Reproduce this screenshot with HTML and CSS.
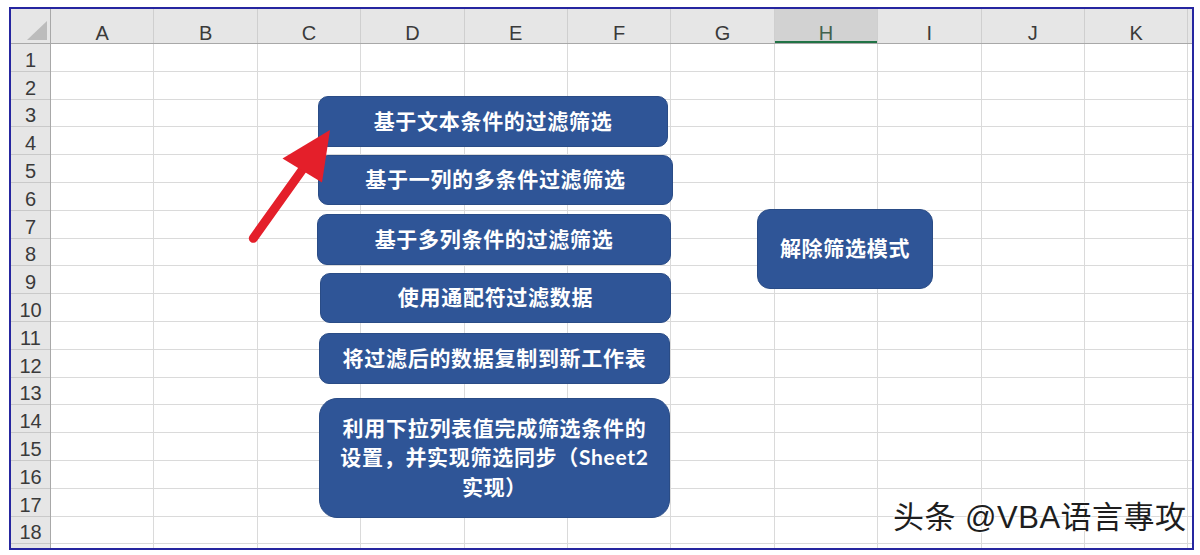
FILE: index.html
```html
<!DOCTYPE html>
<html lang="zh-CN">
<head>
<meta charset="utf-8">
<title>筛选示例</title>
<link rel="stylesheet" href="styles.css">
</head>
<body>
<div class="frame">
  <div class="sheet">
    <div class="corner"><span class="tri"></span></div>
    <div class="colheads">
      <div class="ch">A</div><div class="ch">B</div><div class="ch">C</div><div class="ch">D</div>
      <div class="ch">E</div><div class="ch">F</div><div class="ch">G</div><div class="ch sel">H</div>
      <div class="ch">I</div><div class="ch">J</div><div class="ch">K</div><div class="ch rest"></div>
    </div>
    <div class="rowheads">
      <div class="rh">1</div><div class="rh">2</div><div class="rh">3</div><div class="rh">4</div>
      <div class="rh">5</div><div class="rh">6</div><div class="rh">7</div><div class="rh">8</div>
      <div class="rh">9</div><div class="rh">10</div><div class="rh">11</div><div class="rh">12</div>
      <div class="rh">13</div><div class="rh">14</div><div class="rh">15</div><div class="rh">16</div>
      <div class="rh">17</div><div class="rh">18</div>
    </div>
    <div class="cells"></div>
  </div>

  <div class="shape s1">基于文本条件的过滤筛选</div>
  <div class="shape s2">基于一列的多条件过滤筛选</div>
  <div class="shape s3">基于多列条件的过滤筛选</div>
  <div class="shape s4">使用通配符过滤数据</div>
  <div class="shape s5">将过滤后的数据复制到新工作表</div>
  <div class="shape s6">利用下拉列表值完成筛选条件的<br>设置，并实现筛选同步（Sheet2<br>实现）</div>
  <div class="shape s7">解除筛选模式</div>

  <svg class="arrow" width="1181" height="539" viewBox="0 0 1181 539">
    <line x1="242.3" y1="229.3" x2="294" y2="157" stroke="#e41f2a" stroke-width="9" stroke-linecap="round"/>
    <polygon points="319,121 271.5,149.5 311,173.5" fill="#e41f2a"/>
  </svg>

  <div class="watermark">头条 @VBA语言專攻</div>
</div>
</body>
</html>
```
FILE: styles.css
```css
html, body {
  margin: 0;
  padding: 0;
  background: #ffffff;
}

.frame {
  position: relative;
  box-sizing: border-box;
  width: 1185px;
  height: 543px;
  margin: 7px 0 0 9px;
  border: 2px solid #2626a0;
  background: #ffffff;
  overflow: hidden;
}

.sheet {
  display: grid;
  grid-template-columns: 40px 1fr;
  grid-template-rows: 35px 1fr;
  width: 100%;
  height: 100%;
  font-family: "Liberation Sans", Arial, sans-serif;
  color: #3a3a3a;
}

.corner {
  display: flex;
  justify-content: flex-end;
  align-items: flex-end;
  padding: 0 3px 3px 0;
  background: #e6e6e6;
  border-right: 1px solid #a8a8a8;
  border-bottom: 1px solid #a8a8a8;
  box-sizing: border-box;
}

.tri {
  width: 0;
  height: 0;
  border-left: 20px solid transparent;
  border-bottom: 19px solid #bcbcbc;
}

.colheads {
  display: flex;
  background: #e6e6e6;
  border-bottom: 1px solid #a8a8a8;
  box-sizing: border-box;
}

.ch {
  flex: 0 0 103.4px;
  box-sizing: border-box;
  display: flex;
  justify-content: center;
  align-items: flex-end;
  padding-bottom: 0;
  font-size: 20px;
  line-height: 19px;
  border-right: 1px solid #cfcfcf;
}

.ch.sel {
  background: #d2d2d2;
  color: #41614d;
  box-shadow: inset 0 -2px 0 #217346;
}

.ch.rest {
  flex: 1 1 auto;
  border-right: none;
}

.rowheads {
  display: flex;
  flex-direction: column;
  background: #e6e6e6;
  border-right: 1px solid #a8a8a8;
  box-sizing: border-box;
}

.rh {
  flex: 0 0 27.8px;
  box-sizing: border-box;
  display: flex;
  justify-content: center;
  align-items: flex-end;
  padding-bottom: 0;
  font-size: 20px;
  line-height: 21px;
  border-bottom: 1px solid #c9c9c9;
}

.cells {
  background-color: #ffffff;
  background-image:
    repeating-linear-gradient(to right, transparent 0, transparent 102.4px, #dadada 102.4px, #dadada 103.4px),
    repeating-linear-gradient(to bottom, transparent 0, transparent 26.8px, #dadada 26.8px, #dadada 27.8px);
}

.shape {
  position: absolute;
  box-sizing: border-box;
  display: flex;
  align-items: center;
  justify-content: center;
  text-align: center;
  padding-bottom: 2px;
  background: #2f5597;
  border: 1px solid #2a4c86;
  border-radius: 10px;
  color: #ffffff;
  font-family: "Lato", "Noto Sans CJK SC", sans-serif;
  font-weight: 700;
  font-size: 21px;
  letter-spacing: 0.7px;
  line-height: 29.5px;
  white-space: nowrap;
}

.s1 { left: 307px; top: 87px;  width: 350px; height: 51px; }
.s2 { left: 307px; top: 146px; width: 355px; height: 50px; }
.s3 { left: 306px; top: 205px; width: 354px; height: 51px; }
.s4 { left: 309px; top: 264px; width: 351px; height: 50px; }
.s5 { left: 308px; top: 324px; width: 351px; height: 51px; }
.s6 { left: 308px; top: 389px; width: 351px; height: 120px; border-radius: 18px; }
.s7 { left: 746px; top: 200px; width: 176px; height: 80px; border-radius: 13px; }

.arrow {
  position: absolute;
  left: 0;
  top: 0;
  pointer-events: none;
}

.watermark {
  position: absolute;
  left: 882px;
  top: 492px;
  font-family: "Liberation Sans", "Noto Sans CJK SC", sans-serif;
  font-size: 31px;
  letter-spacing: 0.5px;
  line-height: 34px;
  color: #1e1e1e;
  white-space: nowrap;
  text-shadow: 1px 1px 1px rgba(255, 255, 255, 0.9), -1px -1px 1px rgba(255, 255, 255, 0.9);
}
```
